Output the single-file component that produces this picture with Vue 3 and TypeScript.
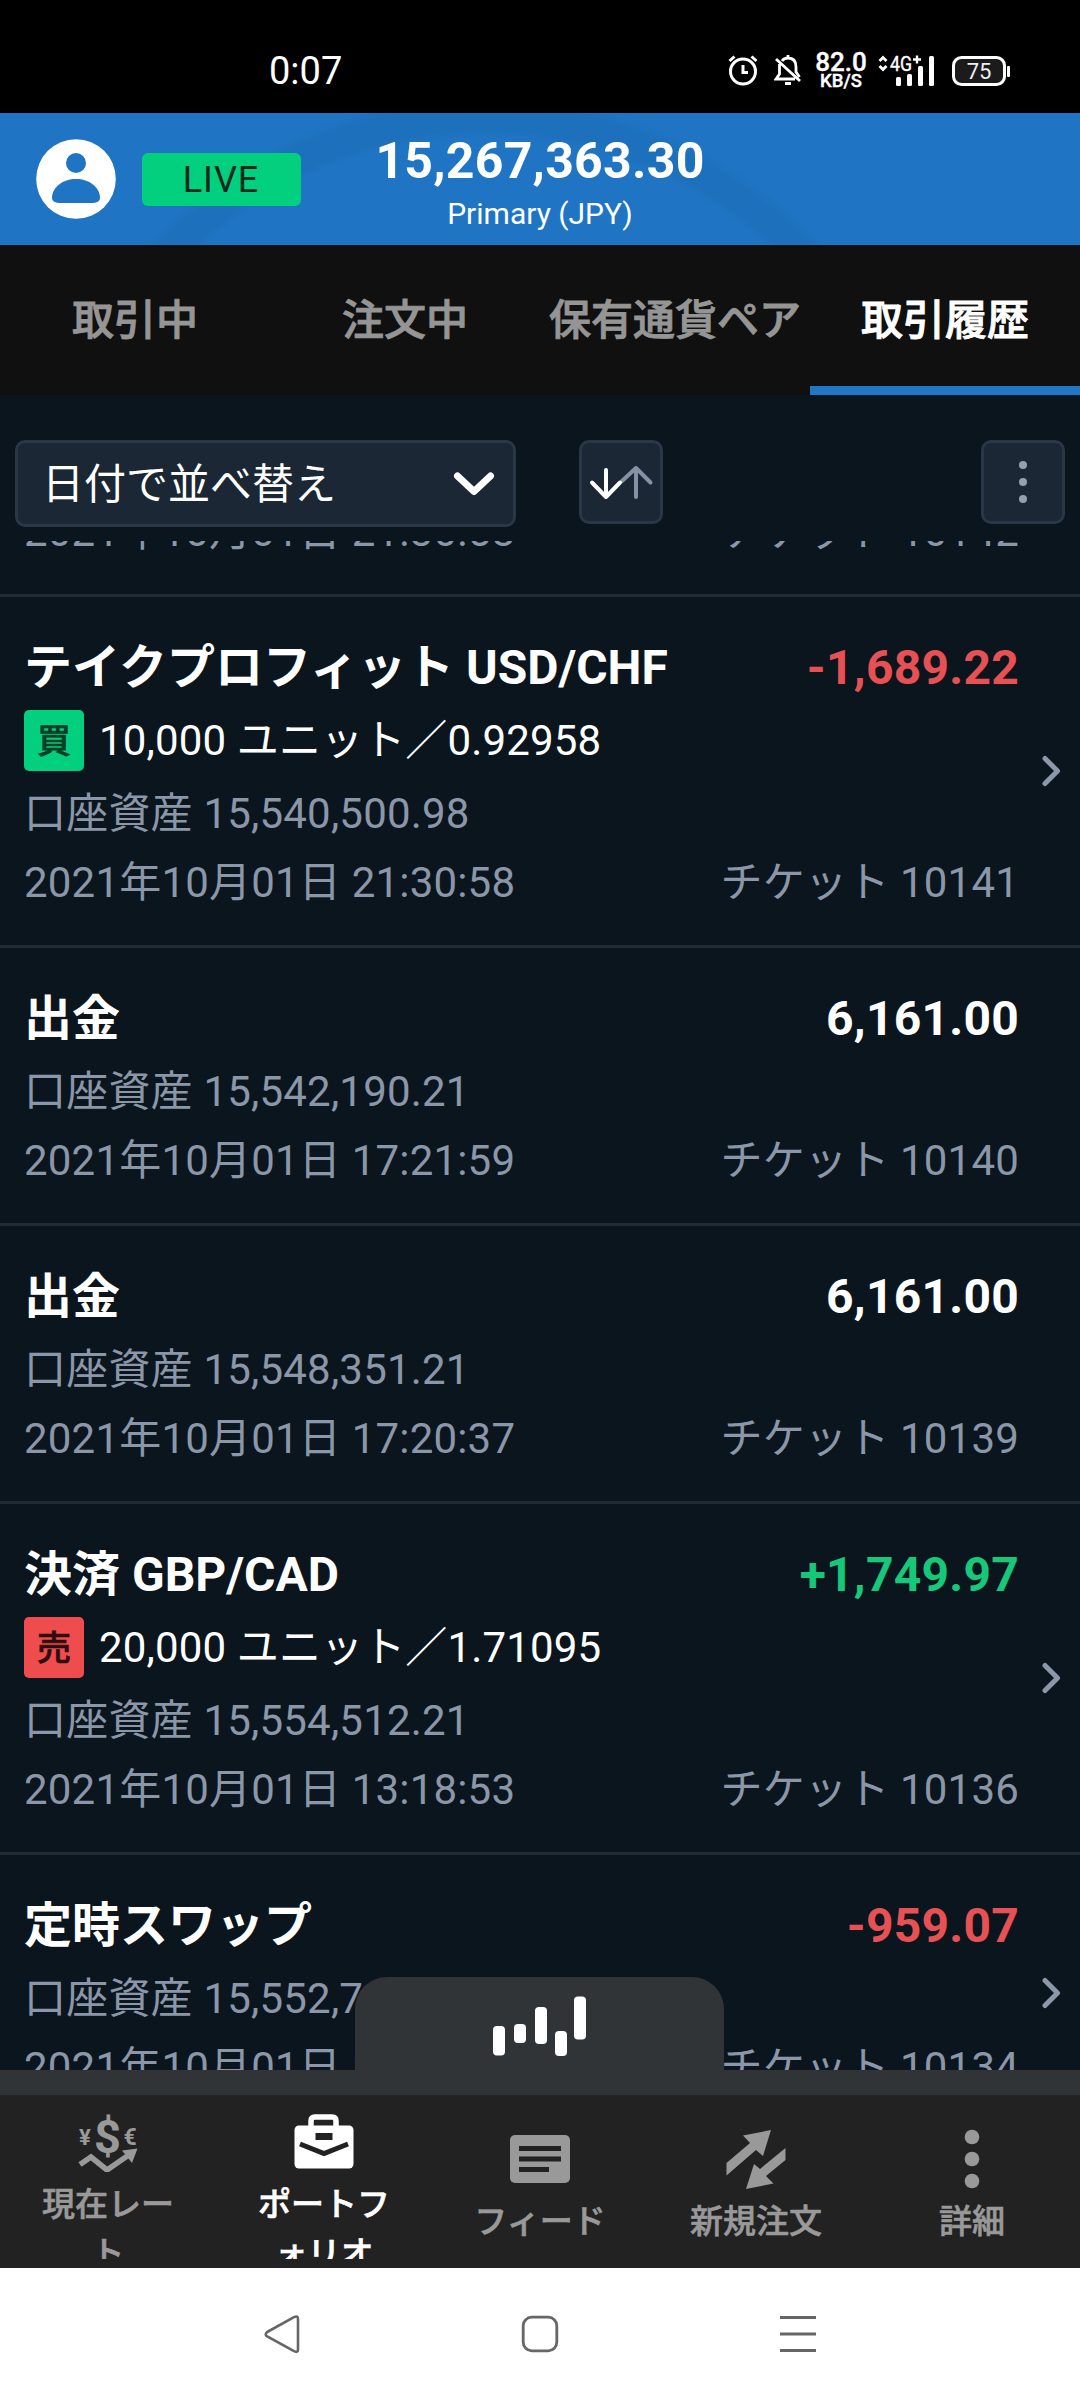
<script setup lang="ts">
interface Entry {
  title: string
  amount: string
  tone: 'plain' | 'up' | 'down'
  side?: 'buy' | 'sell'
  detail?: string
  balance: string
  date: string
  ticket: string
  link: boolean
}

const tabs = ['取引中', '注文中', '保有通貨ペア', '取引履歴']
const activeTab = 3

const previous = { date: '2021年10月01日 21:30:58', ticket: '10142' }

const entries: Entry[] = [
  { title: 'テイクプロフィット USD/CHF', amount: '-1,689.22', tone: 'down', side: 'buy', detail: '10,000 ユニット／0.92958', balance: '15,540,500.98', date: '2021年10月01日 21:30:58', ticket: '10141', link: true },
  { title: '出金', amount: '6,161.00', tone: 'plain', balance: '15,542,190.21', date: '2021年10月01日 17:21:59', ticket: '10140', link: false },
  { title: '出金', amount: '6,161.00', tone: 'plain', balance: '15,548,351.21', date: '2021年10月01日 17:20:37', ticket: '10139', link: false },
  { title: '決済 GBP/CAD', amount: '+1,749.97', tone: 'up', side: 'sell', detail: '20,000 ユニット／1.71095', balance: '15,554,512.21', date: '2021年10月01日 13:18:53', ticket: '10136', link: true },
  { title: '定時スワップ', amount: '-959.07', tone: 'down', balance: '15,552,762.24', date: '2021年10月01日 11:00:00', ticket: '10134', link: true },
]
</script>

<template>
  <div class="screen">
    <div class="status">
      <span class="clock">0:07</span>
      <div class="indicators">
        <svg class="i-alarm" width="30" height="34" viewBox="0 0 30 34" fill="none" stroke="#fff" stroke-width="3">
          <circle cx="15" cy="18.5" r="12.5" />
          <path d="M15 12v7.5h5M1.500 8 6.500 3.500M28.500 8 23.500 3.500" />
        </svg>
        <svg class="i-bell" width="28" height="34" viewBox="0 0 28 34" fill="none" stroke="#fff" stroke-width="2.800">
          <path d="M8 8Q10 5 14 5q8 0 8 9v5l3.500 5M5.500 11v10L2 26h19M2 6l24 22M14 5V2" />
          <path d="M11 30.500h6" stroke-width="3" />
        </svg>
        <div class="speed"><b>82.0</b><small>KB/S</small></div>
        <svg class="i-signal" width="58" height="34" viewBox="0 0 58 34">
          <path d="M1.500 8 5 4.500 8.500 8M1.500 13 5 16.500 8.500 13" fill="none" stroke="#fff" stroke-width="2.800" />
          <text x="12" y="17.500" font-size="20" fill="#fff" stroke="#fff" stroke-width="0.400" textLength="22" lengthAdjust="spacingAndGlyphs">4G</text>
          <path d="M35 6.500h8M39 2.500v8" stroke="#fff" stroke-width="2.400" />
          <g fill="#fff">
            <rect x="18" y="24" width="5" height="9" rx="1.500" /><rect x="29" y="21" width="5" height="12" rx="1.500" />
            <rect x="40" y="13" width="5" height="20" rx="1.500" /><rect x="51" y="3" width="5" height="30" rx="1.500" />
          </g>
        </svg>
        <svg class="i-battery" width="60" height="34" viewBox="0 0 60 34">
          <rect x="1.500" y="4.500" width="51" height="27" rx="8" fill="#1b1b1b" stroke="#fff" stroke-width="3" />
          <rect x="55" y="13" width="3" height="11" rx="1" fill="#fff" />
          <text x="27" y="25.500" font-size="22" fill="#eee" text-anchor="middle">75</text>
        </svg>
      </div>
    </div>

    <header class="account">
      <div class="left">
        <svg width="80" height="80" viewBox="0 0 80 80">
          <circle cx="40" cy="40" r="39.800" fill="#fff" />
          <circle cx="40" cy="24" r="10" fill="#1f75c3" />
          <path d="M16 59C16 48 27 40 40 40s24 8 24 19c0 3-3 5-9 5H25c-6 0-9-2-9-5z" fill="#1f75c3" />
        </svg>
        <span class="live">LIVE</span>
      </div>
      <div class="balance">
        <strong>15,267,363.30</strong>
        <span>Primary (JPY)</span>
      </div>
    </header>

    <nav class="tabs">
      <div v-for="(t, i) in tabs" :key="t" class="tab" :class="{ active: i === activeTab }">{{ t }}</div>
    </nav>

    <main class="content">
      <div class="filters">
        <div class="select">
          <span>日付で並べ替え</span>
          <svg width="42" height="28" viewBox="0 0 42 28"><path d="M4.500 6 21 21.500 37.500 6" fill="none" stroke="#fff" stroke-width="7" stroke-linecap="round" stroke-linejoin="round" /></svg>
        </div>
        <div class="square sort">
          <svg width="78" height="78" viewBox="0 0 78 78" fill="none" stroke-width="4" stroke-linecap="round" stroke-linejoin="round">
            <path d="M54 54V25M39.500 38.500 54 25l14.500 14.500" stroke="#8592a6" />
            <path d="M24 27v27M10 39.500l14 14.500 14-14.500" stroke="#fff" />
          </svg>
        </div>
        <div class="square more">
          <svg width="78" height="78" viewBox="0 0 78 78" fill="#95a1b2"><circle cx="39" cy="22" r="4" /><circle cx="39" cy="39" r="4" /><circle cx="39" cy="56" r="4" /></svg>
        </div>
      </div>

      <div class="list">
        <div class="row partial">
          <div class="line muted"><span>{{ previous.date }}</span><span>チケット {{ previous.ticket }}</span></div>
        </div>
        <div v-for="e in entries" :key="e.ticket" class="row">
          <div class="body">
            <div class="line head"><span>{{ e.title }}</span><span class="amount" :class="e.tone">{{ e.amount }}</span></div>
            <div v-if="e.side" class="line units">
              <span class="badge" :class="e.side">{{ e.side === 'buy' ? '買' : '売' }}</span>
              <span>{{ e.detail }}</span>
            </div>
            <div class="line muted">口座資産 {{ e.balance }}</div>
            <div class="line muted"><span>{{ e.date }}</span><span>チケット {{ e.ticket }}</span></div>
          </div>
          <div class="go">
            <svg v-if="e.link" width="20" height="32" viewBox="0 0 20 32"><path d="M3 3.500 15.500 16 3 28.500" fill="none" stroke="#8c98a9" stroke-width="5" stroke-linecap="round" stroke-linejoin="round" /></svg>
          </div>
        </div>
      </div>
    </main>

    <footer class="dock">
      <div class="handle">
        <svg width="96" height="62" viewBox="0 0 96 62" fill="#fff">
          <rect x="1" y="30" width="12" height="29.500" rx="4" />
          <rect x="22" y="28" width="12" height="19" rx="4" />
          <rect x="43" y="11" width="12" height="37" rx="4" />
          <rect x="63" y="35" width="12" height="25" rx="4" />
          <rect x="82" y="0.500" width="12" height="43" rx="4" />
        </svg>
      </div>
      <div class="strip"></div>
      <nav class="menu">
        <div class="item tall">
          <svg width="60" height="60" viewBox="0 0 60 60" fill="#999">
            <text x="29.500" y="40.500" font-size="47" font-weight="700" text-anchor="middle">$</text>
            <text x="7" y="32.500" font-size="22" font-weight="700" text-anchor="middle">¥</text>
            <text x="52" y="32.500" font-size="23" font-weight="700" text-anchor="middle">€</text>
            <path d="M2 52.500 13 45l16 13 21-14.500" fill="none" stroke="#999" stroke-width="5.500" />
            <path d="M44 38.500 59.500 36.500 54 51z" />
          </svg>
          <span>現在レー<br>ト</span>
        </div>
        <div class="item tall on">
          <svg width="60" height="60" viewBox="0 0 60 60">
            <path d="M17 16V9q0-4 4-4h17q4 0 4 4v7" fill="none" stroke="#fff" stroke-width="5.500" />
            <rect x="0.500" y="13.500" width="59" height="43" rx="4.500" fill="#fff" />
            <rect x="21.500" y="21" width="17" height="7" fill="#222" />
            <path d="M6 32 30 41.500 54 32" fill="none" stroke="#222" stroke-width="5" />
          </svg>
          <span>ポートフ<br>ォリオ</span>
        </div>
        <div class="item">
          <svg width="60" height="60" viewBox="0 0 60 60">
            <rect y="6" width="60" height="48" rx="5" fill="#999" />
            <path d="M9 19.500h42M9 30h42M9 40.500h30" stroke="#222" stroke-width="5" />
          </svg>
          <span>フィード</span>
        </div>
        <div class="item">
          <svg width="60" height="60" viewBox="0 0 60 60" fill="#999">
            <path d="M.5 34 24 14 17 6.500 45 1 37 27 30 21 .5 46.500z" />
            <path d="M59.500 19 34 40 28 35 20 60 47.500 54.500 40 47 59.500 31z" />
          </svg>
          <span>新規注文</span>
        </div>
        <div class="item">
          <svg width="60" height="60" viewBox="0 0 60 60" fill="#999"><circle cx="30" cy="8" r="7.300" /><circle cx="30" cy="30" r="7.300" /><circle cx="30" cy="52" r="7.300" /></svg>
          <span>詳細</span>
        </div>
      </nav>
    </footer>

    <div class="system">
      <svg width="40" height="40" viewBox="0 0 40 40"><path d="M5.200 18 32 3.200q4-2 4 2v30q0 4-4 2L5.200 22.500q-3-2 0-4.500z" fill="none" stroke="#666" stroke-width="2.600" /></svg>
      <svg width="40" height="40" viewBox="0 0 40 40"><rect x="3.200" y="3.200" width="33.600" height="33.600" rx="8.500" fill="none" stroke="#666" stroke-width="2.800" /></svg>
      <svg width="40" height="40" viewBox="0 0 40 40"><path d="M2 3.500h36M2 20h36M2 36.500h36" stroke="#666" stroke-width="3" /></svg>
    </div>
  </div>
</template>

<style>
body { margin: 0; background: #0a151e; }
</style>

<style scoped>
.screen {
  width: 1080px;
  height: 2400px;
  display: flex;
  flex-direction: column;
  overflow: hidden;
  background: #0a151e;
  color: #fff;
  font-family: Roboto, "Noto Sans CJK JP", sans-serif;
}
svg { display: block; flex: none; }
.status {
  height: 113px;
  flex: none;
  background: #000;
  display: flex;
  justify-content: space-between;
  box-sizing: border-box;
  padding: 53px 68px 0 269px;
}
.clock { font-size: 38px; line-height: 36px; }
.indicators { display: flex; height: 38px; }
.i-bell { margin-left: 16px; }
.speed { width: 50px; margin-left: 14px; display: flex; flex-direction: column; align-items: center; white-space: nowrap; }
.speed b { font-size: 26px; line-height: 18px; font-weight: 500; -webkit-text-stroke: 0.4px #fff; }
.speed small { font-size: 18.500px; line-height: 21px; font-weight: 500; -webkit-text-stroke: 0.4px #fff; }
.i-signal { margin-left: 12px; }
.i-battery { margin-left: 16px; }

.account {
  height: 132px;
  flex: none;
  display: grid;
  grid-template-columns: 1fr auto 1fr;
  align-items: start;
  background:
    radial-gradient(circle at 485px 443px, transparent 418px, rgba(0, 30, 60, 0.06) 426px, rgba(0, 30, 60, 0.06) 450px, transparent 460px),
    #1f75c3;
}
.left { display: flex; align-items: center; gap: 25.500px; padding: 26px 0 0 36px; }
.live {
  width: 159px;
  height: 53px;
  line-height: 54px;
  border-radius: 6px;
  background: #02d07f;
  color: #062a1c;
  font-size: 36px;
  letter-spacing: 1px;
  text-align: center;
}
.balance { display: flex; flex-direction: column; align-items: center; padding-top: 18px; }
.balance strong { font-size: 50px; line-height: 60px; font-weight: 700; letter-spacing: 0.25px; }
.balance span { font-size: 30px; line-height: 46px; }

.tabs { height: 150px; flex: none; display: flex; background: #101010; }
.tab {
  flex: 1 0 0;
  box-sizing: border-box;
  border-bottom: 9px solid transparent;
  padding-top: 11px;
  line-height: 130px;
  text-align: center;
  white-space: nowrap;
  font-size: 42px;
  font-weight: 500;
  color: #959595;
  -webkit-text-stroke: 0.9px currentColor;
}
.tab.active { color: #fff; border-color: #1f77c6; }

.content { height: 1675px; flex: none; }
.filters { height: 146px; box-sizing: border-box; padding: 45px 15px 0; display: flex; align-items: flex-start; }
.select, .square {
  box-sizing: border-box;
  border: 3px solid #2a3746;
  border-radius: 10px;
  background: #1b2734;
}
.select { width: 501px; height: 87px; display: flex; align-items: center; justify-content: space-between; padding: 0 18px 0 24px; font-size: 42px; }
.select span { line-height: 78px; padding-top: 3px; }
.square { width: 84px; height: 84px; }
.sort { margin-left: 63px; }
.more { margin-left: auto; }

.list { height: 1529px; overflow: hidden; }
.row { display: flex; box-sizing: border-box; border-bottom: 3px solid #202b35; padding: 36px 0 28px 24px; }
.partial { height: 56px; overflow: hidden; flex-direction: column; justify-content: flex-end; padding: 0 61px 28px 24px; }
.body { width: 995px; flex: none; }
.line { display: flex; justify-content: space-between; white-space: pre; font-size: 42px; line-height: 69px; }
.muted { height: 69px; flex: none; color: #8b97a8; letter-spacing: 0.2px; }
.head { height: 70px; line-height: 70px; margin-bottom: 3px; font-size: 48px; font-weight: 700; }
.amount { letter-spacing: 0.25px; }
.up { color: #16c87a; }
.down { color: #e85153; }
.units { height: 70px; line-height: 70px; margin-bottom: 3px; justify-content: flex-start; align-items: center; gap: 15px; letter-spacing: 0.15px; }
.badge { width: 60px; height: 61px; line-height: 63px; margin-top: -1px; border-radius: 5px; text-align: center; font-size: 34px; font-weight: 500; -webkit-text-stroke: 0.7px currentColor; }
.buy { background: #02d07f; color: #063d27; }
.sell { background: #ef4c4e; color: #2d0d10; }
.go { flex: 1; display: flex; align-items: center; justify-content: flex-end; padding-right: 18px; margin: -36px 0 -28px; }

.dock { height: 198px; flex: none; position: relative; }
.handle {
  position: absolute;
  left: 355px;
  top: -93px;
  width: 369px;
  height: 94px;
  box-sizing: border-box;
  padding: 19px 0 0 137px;
  background: #313436;
  border-radius: 32px 32px 0 0;
}
.strip { height: 25px; background: #313436; }
.menu { height: 173px; display: flex; background: #222; }
.item {
  flex: 1 0 0;
  height: 164px;
  box-sizing: border-box;
  padding-top: 34px;
  overflow: hidden;
  display: flex;
  flex-direction: column;
  align-items: center;
  color: #999;
  font-size: 33px;
  font-weight: 500;
  line-height: 49px;
  text-align: center;
}
.item span { margin-top: 8px; white-space: nowrap; -webkit-text-stroke: 0.6px currentColor; }
.tall { padding-top: 17px; }
.on { color: #fff; }

.system { height: 132px; flex: none; background: #fff; display: flex; justify-content: space-between; align-items: center; padding: 0 262px; }
</style>
